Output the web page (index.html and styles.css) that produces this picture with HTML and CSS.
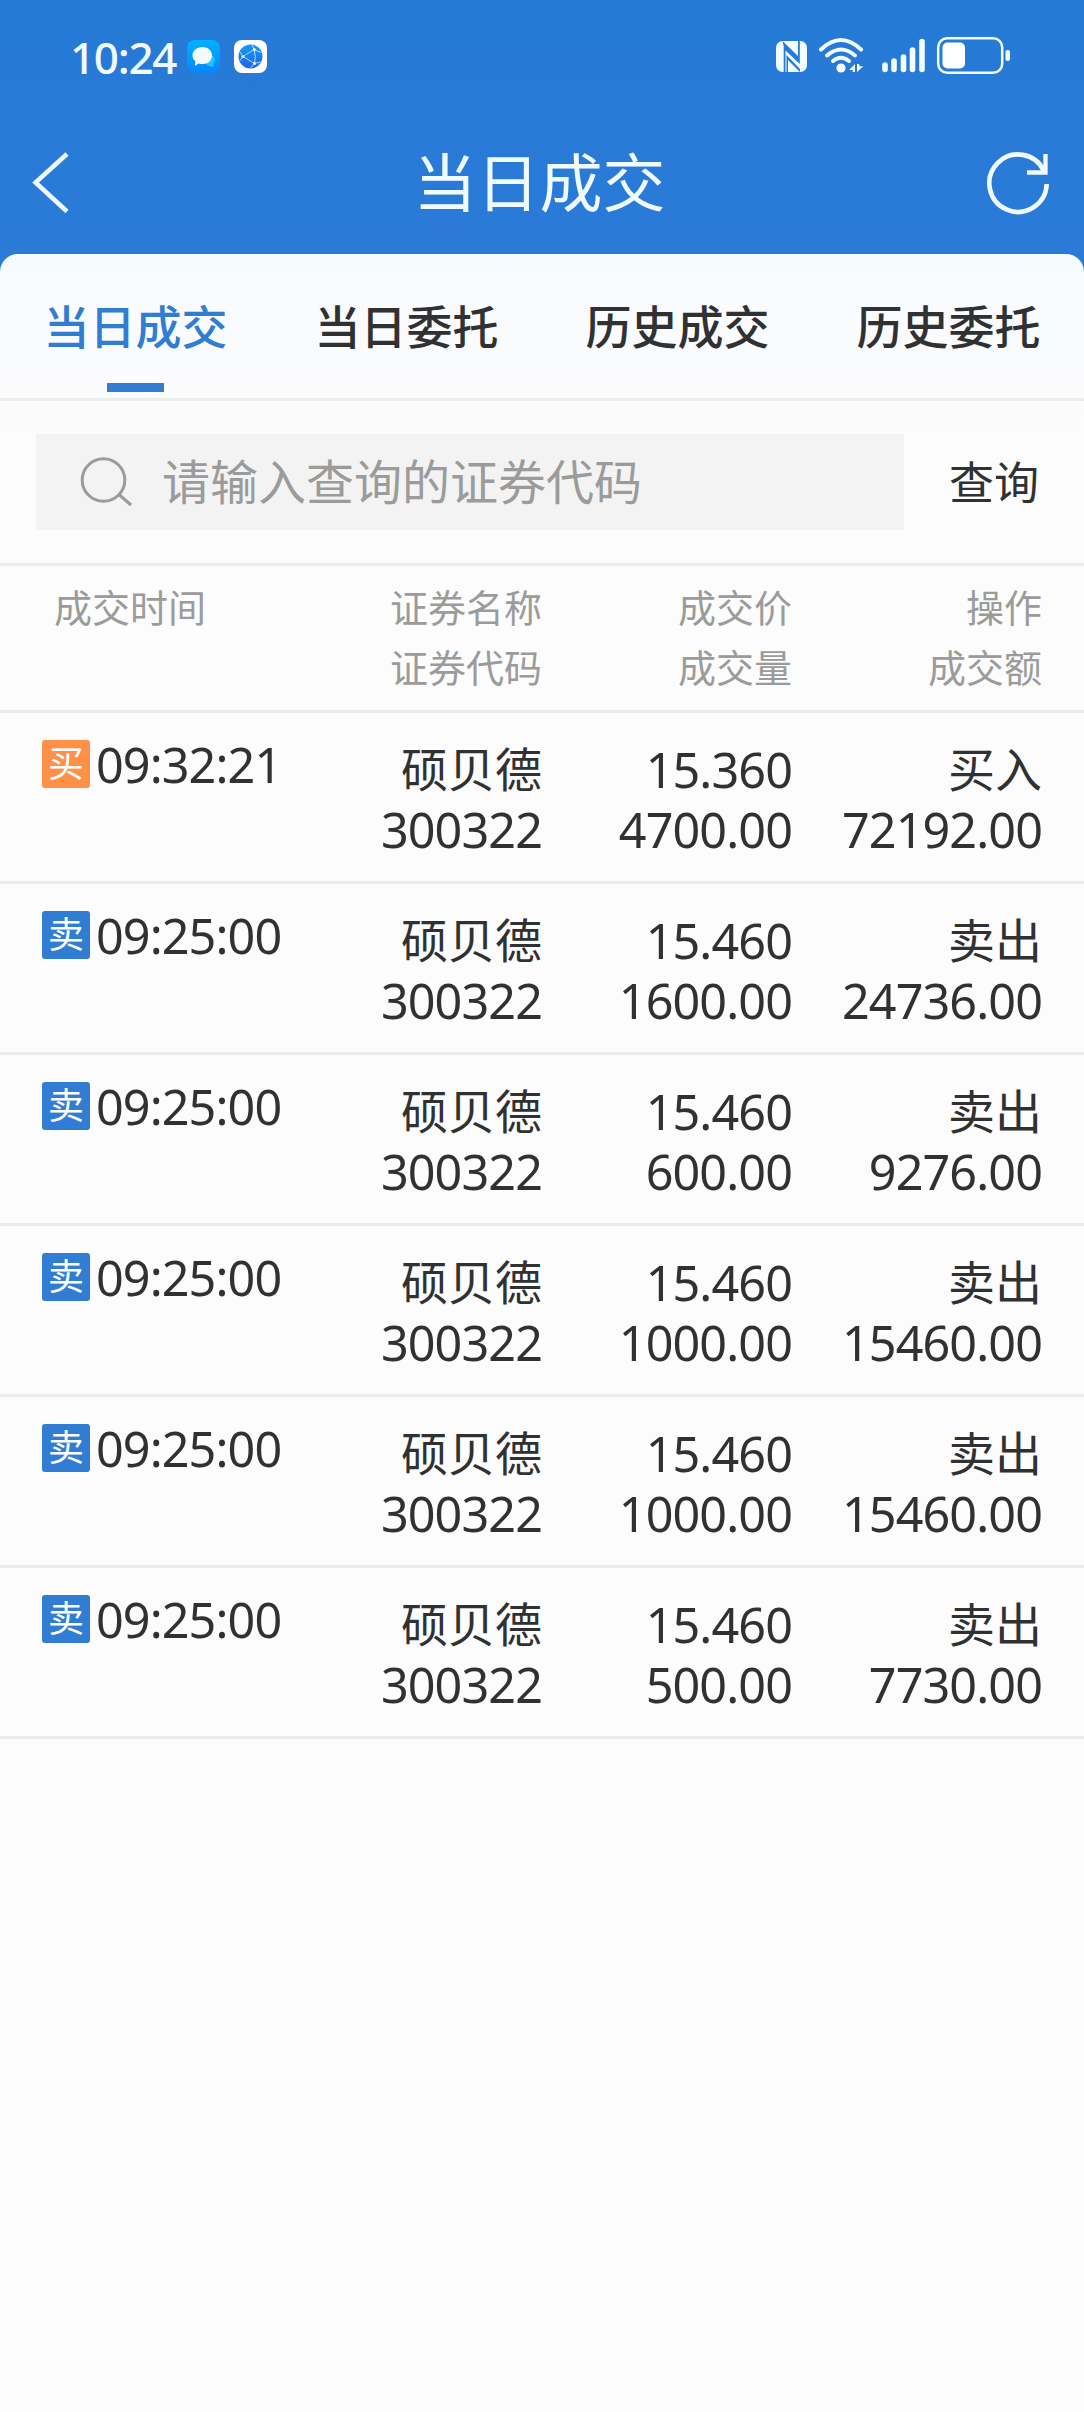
FILE: index.html
```html
<!DOCTYPE html>
<html lang="zh-CN">
<head>
  <meta charset="UTF-8">
  <title>当日成交</title>
  <link rel="stylesheet" href="styles.css">
</head>
<body>
  <header class="header">
    <div class="status-bar">
      <span class="clock">10:24</span>
      <svg class="app-icon" width="33" height="33" viewBox="0 0 33 33">
        <defs>
          <linearGradient id="chatBg" x1="0" y1="0" x2="0" y2="1">
            <stop offset="0" stop-color="#02b2fd"/>
            <stop offset="1" stop-color="#0785fb"/>
          </linearGradient>
          <linearGradient id="globeBg" x1="0" y1="0" x2="0" y2="1">
            <stop offset="0" stop-color="#149af5"/>
            <stop offset="1" stop-color="#2362e6"/>
          </linearGradient>
        </defs>
        <rect width="33" height="33" rx="8" fill="url(#chatBg)"/>
        <path d="M18 20a5 5 0 1 1 8 3.500l.8 3.500-3.500-.8a6 6 0 0 1-5.300-6.200z" fill="#1cc4fa"/>
        <path d="M15.500 7C21 7 25 10.500 25 15.500S21 24 15.500 24c-1.500 0-2.700-.2-3.800-.6L8 26l.3-4.800C6.500 19.700 5.500 17.800 5.500 15.500 5.500 10.500 10 7 15.500 7z" fill="#f3fbff"/>
      </svg>
      <svg class="app-icon" width="33" height="33" viewBox="0 0 33 33">
        <rect width="33" height="33" rx="8" fill="#fff"/>
        <circle cx="16.500" cy="16.500" r="12" fill="url(#globeBg)"/>
        <path d="M6 12l3 4.500 11-7M9 16.500l11.500 7M20 9.500q2.500 7 .5 14M20 9.500l-2-5M20 9.500l7 3M20.500 23.500l6-1.500M20.500 23.500l-4 4.500M9 16.500l-3 4" fill="none" stroke="#a9ddff" stroke-width="1"/>
        <circle cx="9" cy="16.500" r="1.500" fill="#dff4ff"/>
        <circle cx="20.300" cy="9.500" r="1.500" fill="#dff4ff"/>
        <circle cx="20.500" cy="23.500" r="1.500" fill="#dff4ff"/>
      </svg>
      <svg class="status-icons" width="236" height="40" viewBox="776 36 236 40">
        <!-- nfc -->
        <rect x="776" y="41" width="31" height="31" rx="6.500" fill="#f2fdff"/>
        <path d="M782.500 41l15.500 15V41h1.800v23L785.500 50.500V72h-1.800V46z" fill="#277ad6"/>
        <path d="M786.500 55L800 69v3L788 60v12h-1.500z" fill="#277ad6"/>
        <!-- wifi -->
        <g fill="none" stroke="#f2fdff" stroke-width="4" stroke-linecap="round">
          <path d="M821 49.500Q841 30.500 861 49.500"/>
          <path d="M827 55.500Q841 43.500 855 55.500"/>
          <path d="M833 61Q841 54.500 849 61"/>
        </g>
        <circle cx="841" cy="68" r="4.600" fill="#f2fdff"/>
        <path d="M855 64v8h-2.300v-2H849zM857 72v-8h2.300v2.300h4z" fill="#f2fdff"/>
        <!-- signal -->
        <g stroke="#f2fdff" stroke-width="5.600" stroke-linecap="round">
          <path d="M885 65v4.500M894 61v8.500M903.500 57v12.500M912.500 50v19.500M922 41.500v28"/>
        </g>
        <!-- battery -->
        <rect x="938.200" y="38.200" width="64" height="34.500" rx="9" fill="none" stroke="#f2fdff" stroke-width="2.500"/>
        <rect x="942.500" y="42.500" width="22.500" height="26" rx="5" fill="#fff"/>
        <rect x="1005.500" y="50" width="4.500" height="11" rx="2" fill="#f2fdff"/>
      </svg>
    </div>
    <div class="nav-bar">
      <svg class="back" width="40" height="64" viewBox="0 0 40 64">
        <path d="M36 3L4.500 31.500l31.500 29" fill="none" stroke="#f0fbff" stroke-width="4.500"/>
      </svg>
      <h1 class="title">当日成交</h1>
      <svg class="refresh" width="64" height="64" viewBox="0 0 64 64">
        <path d="M60.700 33A28.700 28.700 0 1 1 58 20" fill="none" stroke="#f0fbff" stroke-width="4.600"/>
        <path d="M59.500 3v18.500H41" fill="none" stroke="#f0fbff" stroke-width="4.300"/>
      </svg>
    </div>
  </header>

  <main class="panel">
    <nav class="tabs">
      <a class="tab active">当日成交</a>
      <a class="tab">当日委托</a>
      <a class="tab">历史成交</a>
      <a class="tab">历史委托</a>
    </nav>

    <div class="search">
      <div class="search-box">
        <svg width="54" height="54" viewBox="0 0 54 54">
          <g fill="none" stroke="#9b9b9b" stroke-width="3">
            <circle cx="25.500" cy="25" r="21.300"/>
            <path d="M41 39.500L53 50"/>
          </g>
        </svg>
        <span class="placeholder">请输入查询的证券代码</span>
      </div>
      <span class="search-btn">查询</span>
    </div>

    <div class="row head">
      <div class="time">成交时间</div>
      <div class="cell"><span>证券名称</span><span>证券代码</span></div>
      <div class="cell"><span>成交价</span><span>成交量</span></div>
      <div class="cell"><span>操作</span><span>成交额</span></div>
    </div>

    <div class="row">
      <div class="time"><i class="badge buy">买</i>09:32:21</div>
      <div class="cell"><span class="cn">硕贝德</span><span>300322</span></div>
      <div class="cell"><span>15.360</span><span>4700.00</span></div>
      <div class="cell"><span class="cn">买入</span><span>72192.00</span></div>
    </div>
    <div class="row">
      <div class="time"><i class="badge sell">卖</i>09:25:00</div>
      <div class="cell"><span class="cn">硕贝德</span><span>300322</span></div>
      <div class="cell"><span>15.460</span><span>1600.00</span></div>
      <div class="cell"><span class="cn">卖出</span><span>24736.00</span></div>
    </div>
    <div class="row">
      <div class="time"><i class="badge sell">卖</i>09:25:00</div>
      <div class="cell"><span class="cn">硕贝德</span><span>300322</span></div>
      <div class="cell"><span>15.460</span><span>600.00</span></div>
      <div class="cell"><span class="cn">卖出</span><span>9276.00</span></div>
    </div>
    <div class="row">
      <div class="time"><i class="badge sell">卖</i>09:25:00</div>
      <div class="cell"><span class="cn">硕贝德</span><span>300322</span></div>
      <div class="cell"><span>15.460</span><span>1000.00</span></div>
      <div class="cell"><span class="cn">卖出</span><span>15460.00</span></div>
    </div>
    <div class="row">
      <div class="time"><i class="badge sell">卖</i>09:25:00</div>
      <div class="cell"><span class="cn">硕贝德</span><span>300322</span></div>
      <div class="cell"><span>15.460</span><span>1000.00</span></div>
      <div class="cell"><span class="cn">卖出</span><span>15460.00</span></div>
    </div>
    <div class="row">
      <div class="time"><i class="badge sell">卖</i>09:25:00</div>
      <div class="cell"><span class="cn">硕贝德</span><span>300322</span></div>
      <div class="cell"><span>15.460</span><span>500.00</span></div>
      <div class="cell"><span class="cn">卖出</span><span>7730.00</span></div>
    </div>
  </main>
</body>
</html>
```

FILE: styles.css
```css
* { box-sizing: border-box; }
body {
  margin: 0;
  min-height: 2412px;
  font-family: "Noto Sans", "Noto Sans CJK SC", sans-serif;
  color: #303132;
  background: #fcfcfc;
}
svg { display: block; flex: none; }

/* Blue header */
.header {
  height: 284px;
  margin-bottom: -30px;
  background: linear-gradient(#257ad6, #2b7bd7);
  color: #f0fbff;
}
.status-bar {
  display: flex;
  align-items: center;
  height: 112px;
  padding: 0 72px 0 70px;
}
.clock {
  width: 117px;
  padding-top: 1px;
  font-size: 44px;
  font-weight: 500;
  letter-spacing: -1.3px;
  line-height: 60px;
  white-space: nowrap;
}
.app-icon { margin-right: 14px; }
.status-icons { margin-left: auto; }
.nav-bar {
  display: flex;
  align-items: center;
  justify-content: space-between;
  height: 142px;
  padding: 0 34px 0 31px;
}
.title {
  margin: 0;
  padding: 0 0 2px 22px;
  font-size: 63px;
  font-weight: 400;
  line-height: 90px;
}

/* White panel */
.panel {
  border-radius: 18px 18px 0 0;
  background: linear-gradient(#f6fbff, #fafbfe 60px, #fcfcfc 200px);
}
.tabs {
  display: flex;
  height: 147px;
  border-bottom: 3px solid #ebecec;
}
.tab {
  display: flex;
  flex: 1;
  flex-direction: column;
  align-items: center;
  justify-content: space-between;
  padding: 37px 0 6px;
  font-size: 46px;
  font-weight: 500;
  line-height: 70px;
}
.tab.active { color: #307dd1; }
.tab.active::after {
  content: "";
  width: 57px;
  height: 9px;
  background: #307dd1;
}

.search {
  display: flex;
  align-items: center;
  height: 165px;
  padding: 0 45px 0 36px;
  border-bottom: 3px solid #ebebeb;
}
.search-box {
  display: flex;
  align-items: center;
  width: 868px;
  height: 96px;
  padding-left: 42px;
  background: #f3f3f3;
}
.placeholder {
  margin-left: 30px;
  font-size: 48px;
  line-height: 70px;
  color: #9b9b9b;
}
.search-btn {
  margin-left: auto;
  padding-bottom: 3px;
  font-size: 45px;
}

/* Trade list */
.row {
  display: grid;
  grid-template-columns: 250px 250px 250px 250px;
  height: 171px;
  padding: 26px 42px 0;
  border-bottom: 3px solid #ebebeb;
  font-size: 48.5px;
  letter-spacing: -0.9px;
  line-height: 60px;
}
.time {
  display: flex;
  align-items: center;
  height: 50px;
  white-space: nowrap;
}
.badge {
  width: 48px;
  height: 48px;
  margin-right: 6px;
  border-radius: 3px;
  color: #fff;
  font-size: 36px;
  font-style: normal;
  letter-spacing: 0;
  line-height: 47px;
  text-align: center;
}
.buy { background: #fe9048; }
.sell { background: #307dd3; }
.cell {
  display: flex;
  flex-direction: column;
  text-align: right;
  white-space: nowrap;
}
.cn {
  font-size: 47px;
  letter-spacing: 0;
}
.head {
  height: 147px;
  padding-top: 11px;
  color: #9b9b9b;
  font-size: 38px;
  letter-spacing: 0;
}
.head .time {
  height: 60px;
  padding-left: 12px;
}
```
